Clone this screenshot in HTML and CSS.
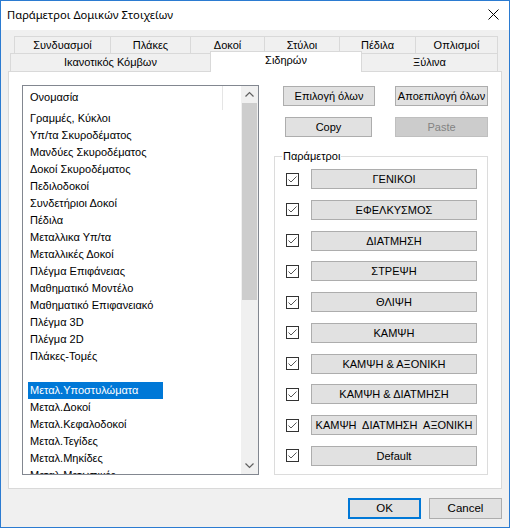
FILE: index.html
```html
<!DOCTYPE html>
<html>
<head>
<meta charset="utf-8">
<link rel="stylesheet" href="styles.css">
</head>
<body>
<div class="window">
  <div class="titlebar">
    <span class="title">Παράμετροι Δομικών Στοιχείων</span>
    <svg class="close" width="11" height="11" viewBox="0 0 11 11"><path d="M0.5 0.5L10.5 10.5M10.5 0.5L0.5 10.5" stroke="#000" stroke-width="1" fill="none"/></svg>
  </div>
  <div class="client">
    <div class="tabrow row1">
      <div class="tab t1">Συνδυασμοί</div>
      <div class="tab t2">Πλάκες</div>
      <div class="tab t3">Δοκοί</div>
      <div class="tab t4">Στύλοι</div>
      <div class="tab t5">Πέδιλα</div>
      <div class="tab t6">Οπλισμοί</div>
    </div>
    <div class="tabrow row2">
      <div class="tab r1">Ικανοτικός Κόμβων</div>
      <div class="tab r2 selected">Σιδηρών</div>
      <div class="tab r3">Ξύλινα</div>
    </div>
    <div class="panel">
      <div class="list">
        <div class="listbody">
          <div class="listhead"><span class="headcell">Ονομασία</span></div>
          <div class="item"><span>Γραμμές, Κύκλοι</span></div>
          <div class="item"><span>Υπ/τα Σκυροδέματος</span></div>
          <div class="item"><span>Μανδύες Σκυροδέματος</span></div>
          <div class="item"><span>Δοκοί Σκυροδέματος</span></div>
          <div class="item"><span>Πεδιλοδοκοί</span></div>
          <div class="item"><span>Συνδετήριοι Δοκοί</span></div>
          <div class="item"><span>Πέδιλα</span></div>
          <div class="item"><span>Μεταλλικα Υπ/τα</span></div>
          <div class="item"><span>Μεταλλικές Δοκοί</span></div>
          <div class="item"><span>Πλέγμα Επιφάνειας</span></div>
          <div class="item"><span>Μαθηματικό Μοντέλο</span></div>
          <div class="item"><span>Μαθηματικό Επιφανειακό</span></div>
          <div class="item"><span>Πλέγμα 3D</span></div>
          <div class="item"><span>Πλέγμα 2D</span></div>
          <div class="item"><span>Πλάκες-Τομές</span></div>
          <div class="item"><span>&nbsp;</span></div>
          <div class="item sel"><span>Μεταλ.Υποστυλώματα</span></div>
          <div class="item"><span>Μεταλ.Δοκοί</span></div>
          <div class="item"><span>Μεταλ.Κεφαλοδοκοί</span></div>
          <div class="item"><span>Μεταλ.Τεγίδες</span></div>
          <div class="item"><span>Μεταλ.Μηκίδες</span></div>
          <div class="item"><span>Μεταλ.Μετωπικές</span></div>
        </div>
        <div class="scroll">
          <div class="arrow"><svg width="17" height="17" viewBox="0 0 17 17"><path d="M4.5 10.5L8.5 6.5L12.5 10.5" stroke="#606060" stroke-width="1.2" fill="none"/></svg></div>
          <div class="thumb"></div>
          <div class="track"></div>
          <div class="arrow"><svg width="17" height="17" viewBox="0 0 17 17"><path d="M4.5 6.5L8.5 10.5L12.5 6.5" stroke="#606060" stroke-width="1.2" fill="none"/></svg></div>
        </div>
      </div>
      <div class="side">
        <div class="btnrow first">
          <div class="btn b-all">Επιλογή όλων</div>
          <div class="btn b-none">Αποεπιλογή όλων</div>
        </div>
        <div class="btnrow second">
          <div class="btn b-copy">Copy</div>
          <div class="btn b-paste disabled">Paste</div>
        </div>
        <div class="group">
          <span class="legend">Παράμετροι</span>
          <div class="prow"><span class="check"><svg width="13" height="13" viewBox="0 0 13 13"><rect x="0.5" y="0.5" width="12" height="12" fill="#fff" stroke="#333"/><path d="M2.5 6.5L5 9L10.5 3.5" stroke="#555" stroke-width="1" fill="none"/></svg></span><div class="btn pbtn">ΓΕΝΙΚΟΙ</div></div>
          <div class="prow"><span class="check"><svg width="13" height="13" viewBox="0 0 13 13"><rect x="0.5" y="0.5" width="12" height="12" fill="#fff" stroke="#333"/><path d="M2.5 6.5L5 9L10.5 3.5" stroke="#555" stroke-width="1" fill="none"/></svg></span><div class="btn pbtn">ΕΦΕΛΚΥΣΜΟΣ</div></div>
          <div class="prow"><span class="check"><svg width="13" height="13" viewBox="0 0 13 13"><rect x="0.5" y="0.5" width="12" height="12" fill="#fff" stroke="#333"/><path d="M2.5 6.5L5 9L10.5 3.5" stroke="#555" stroke-width="1" fill="none"/></svg></span><div class="btn pbtn">ΔΙΑΤΜΗΣΗ</div></div>
          <div class="prow"><span class="check"><svg width="13" height="13" viewBox="0 0 13 13"><rect x="0.5" y="0.5" width="12" height="12" fill="#fff" stroke="#333"/><path d="M2.5 6.5L5 9L10.5 3.5" stroke="#555" stroke-width="1" fill="none"/></svg></span><div class="btn pbtn">ΣΤΡΕΨΗ</div></div>
          <div class="prow"><span class="check"><svg width="13" height="13" viewBox="0 0 13 13"><rect x="0.5" y="0.5" width="12" height="12" fill="#fff" stroke="#333"/><path d="M2.5 6.5L5 9L10.5 3.5" stroke="#555" stroke-width="1" fill="none"/></svg></span><div class="btn pbtn">ΘΛΙΨΗ</div></div>
          <div class="prow"><span class="check"><svg width="13" height="13" viewBox="0 0 13 13"><rect x="0.5" y="0.5" width="12" height="12" fill="#fff" stroke="#333"/><path d="M2.5 6.5L5 9L10.5 3.5" stroke="#555" stroke-width="1" fill="none"/></svg></span><div class="btn pbtn">ΚΑΜΨΗ</div></div>
          <div class="prow"><span class="check"><svg width="13" height="13" viewBox="0 0 13 13"><rect x="0.5" y="0.5" width="12" height="12" fill="#fff" stroke="#333"/><path d="M2.5 6.5L5 9L10.5 3.5" stroke="#555" stroke-width="1" fill="none"/></svg></span><div class="btn pbtn">ΚΑΜΨΗ &amp; ΑΞΟΝΙΚΗ</div></div>
          <div class="prow"><span class="check"><svg width="13" height="13" viewBox="0 0 13 13"><rect x="0.5" y="0.5" width="12" height="12" fill="#fff" stroke="#333"/><path d="M2.5 6.5L5 9L10.5 3.5" stroke="#555" stroke-width="1" fill="none"/></svg></span><div class="btn pbtn">ΚΑΜΨΗ &amp; ΔΙΑΤΜΗΣΗ</div></div>
          <div class="prow"><span class="check"><svg width="13" height="13" viewBox="0 0 13 13"><rect x="0.5" y="0.5" width="12" height="12" fill="#fff" stroke="#333"/><path d="M2.5 6.5L5 9L10.5 3.5" stroke="#555" stroke-width="1" fill="none"/></svg></span><div class="btn pbtn">ΚΑΜΨΗ&nbsp; ΔΙΑΤΜΗΣΗ&nbsp; ΑΞΟΝΙΚΗ</div></div>
          <div class="prow"><span class="check"><svg width="13" height="13" viewBox="0 0 13 13"><rect x="0.5" y="0.5" width="12" height="12" fill="#fff" stroke="#333"/><path d="M2.5 6.5L5 9L10.5 3.5" stroke="#555" stroke-width="1" fill="none"/></svg></span><div class="btn pbtn">Default</div></div>
        </div>
      </div>
    </div>
    <div class="footer">
      <div class="btn fbtn ok">OK</div>
      <div class="btn fbtn">Cancel</div>
    </div>
  </div>
</div>
</body>
</html>
```

FILE: styles.css
```css
* { box-sizing: border-box; }
html, body { margin: 0; padding: 0; }
body {
  width: 510px;
  height: 528px;
  overflow: hidden;
  background: #f0f0f0;
  font-family: "Liberation Sans", Arial, sans-serif;
  font-size: 11px;
  color: #000;
}
.window {
  width: 510px;
  height: 528px;
  border: 1px solid #2b7bd1;
  background: #f0f0f0;
  display: flex;
  flex-direction: column;
}
.titlebar {
  height: 29px;
  flex: none;
  background: #fff;
  display: flex;
  align-items: center;
  justify-content: space-between;
  padding: 0 10px 2px 6px;
}
.title {
  font-family: "Noto Sans", "Open Sans", sans-serif;
  font-size: 11.2px;
  color: #000;
}
.close { display: block; }
.client {
  padding: 6px 7px 0 7px;
  display: flex;
  flex-direction: column;
}
.tabrow {
  display: flex;
  flex: none;
}
.row1 { height: 17px; padding-left: 6px; }
.row2 { height: 18px; padding-left: 2px; }
.tab {
  border: 1px solid #d9d9d9;
  border-bottom: none;
  margin-right: -1px;
  background: #f0f0f0;
  text-align: center;
  line-height: 16px;
  white-space: nowrap;
}
.row2 .tab { line-height: 17px; }
.t1 { width: 97px; }
.t2 { width: 81px; }
.t3 { width: 75px; }
.t4 { width: 76px; }
.t5 { width: 77px; }
.t6 { width: 83px; }
.r1 { width: 201px; }
.r2 { width: 152px; }
.r3 { width: 137px; }
.tab.selected {
  background: #fff;
  height: 21px;
  margin-top: -2px;
  line-height: 16px;
  position: relative;
  z-index: 1;
}
.panel {
  width: 494px;
  height: 418px;
  flex: none;
  background: #fff;
  border: 1px solid #d9d9d9;
  padding: 13px 0 0 13px;
  display: flex;
  align-items: flex-start;
}
.list {
  width: 237px;
  height: 390px;
  border: 1px solid #828790;
  display: flex;
  overflow: hidden;
  flex: none;
}
.listbody {
  flex: 1;
  overflow: hidden;
}
.listhead {
  height: 24px;
  display: flex;
}
.headcell {
  width: 200px;
  border-right: 1px solid #e5e5e5;
  padding-left: 7px;
  line-height: 23px;
}
.item {
  height: 17px;
  line-height: 17px;
  padding-left: 5px;
  white-space: nowrap;
}
.item span { display: inline-block; padding: 0 2px; }
.item.sel span { background: #0078d7; color: #fff; min-width: 135px; }
.scroll {
  width: 17px;
  flex: none;
  background: #f0f0f0;
  display: flex;
  flex-direction: column;
}
.arrow { height: 17px; flex: none; }
.arrow svg { display: block; }
.thumb {
  height: 197px;
  margin: 0 1px;
  background: #cdcdcd;
  flex: none;
}
.track { flex: 1; }
.side {
  width: 214px;
  margin-left: 15px;
  display: flex;
  flex-direction: column;
}
.btn {
  background: #e1e1e1;
  border: 1px solid #adadad;
  text-align: center;
  white-space: nowrap;
}
.btnrow {
  display: flex;
  height: 20px;
}
.btnrow .btn { line-height: 18px; }
.btnrow.first { margin-top: 1px; }
.btnrow.second { margin-top: 11px; }
.b-all { margin-left: 9px; width: 92px; }
.b-none { margin-left: 20px; width: 93px; }
.b-copy { margin-left: 11px; width: 87px; }
.b-paste { margin-left: 23px; width: 93px; }
.btn.disabled {
  background: #cccccc;
  border-color: #bfbfbf;
  color: #838383;
}
.group {
  margin-top: 19px;
  height: 319px;
  border: 1px solid #dcdcdc;
  position: relative;
  padding: 12px 0 0 11px;
  display: flex;
  flex-direction: column;
  gap: 10.75px;
}
.legend {
  position: absolute;
  top: -7px;
  left: 7px;
  padding: 0 1px;
  background: #fff;
  line-height: 13px;
}
.prow {
  display: flex;
  align-items: center;
  height: 20px;
  flex: none;
}
.check { width: 13px; height: 13px; flex: none; }
.check svg { display: block; }
.pbtn {
  margin-left: 12px;
  width: 166px;
  height: 20px;
  line-height: 18px;
}
.footer {
  display: flex;
  justify-content: flex-end;
  margin-top: 9px;
}
.fbtn {
  width: 73px;
  height: 21px;
  line-height: 19px;
  font-size: 11.5px;
}
.fbtn.ok {
  margin-right: 8px;
  border-color: #0078d7;
  box-shadow: inset 0 0 0 1px #0078d7;
}
```
